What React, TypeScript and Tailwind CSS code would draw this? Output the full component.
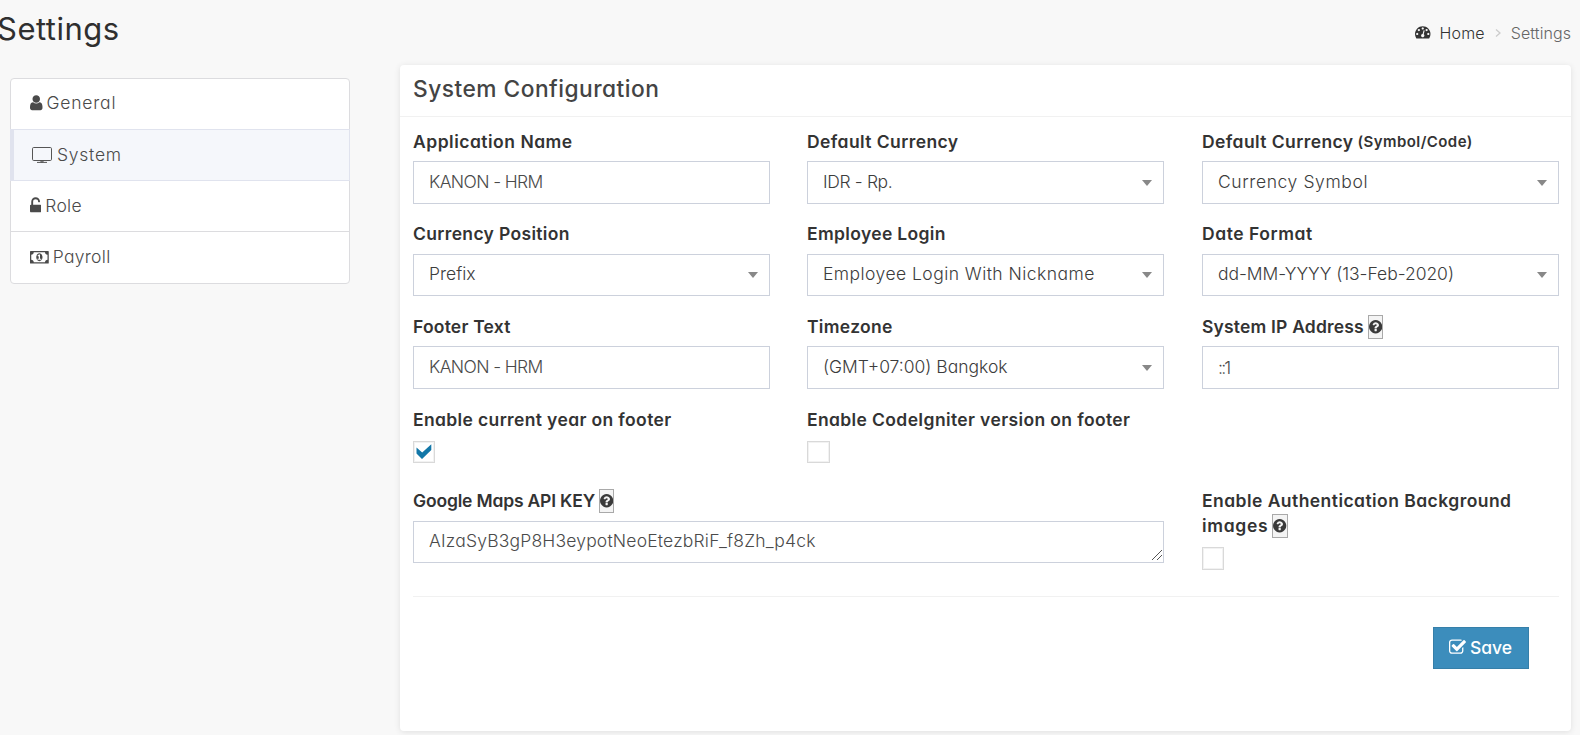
import type { ReactNode } from "react";

const ICONS = {
  user: {
    box: "256 0 1280 1792",
    d: "M1536 1399q0 109-62.5 187t-150.5 78h-854q-88 0-150.5-78t-62.5-187q0-85 8.5-160.5t31.5-152 58.5-131 94-89 134.5-34.5q131 128 313 128t313-128q76 0 134.5 34.5t94 89 58.5 131 31.5 152 8.5 160.5zm-256-887q0 159-112.5 271.5t-271.5 112.5-271.5-112.5-112.5-271.5 112.5-271.5 271.5-112.5 271.5 112.5 112.5 271.5z",
  },
  unlock: {
    box: "256 0 1152 1792",
    d: "M1312 896q40 0 68 28t28 68v576q0 40-28 68t-68 28h-960q-40 0-68-28t-28-68v-576q0-40 28-68t68-28h32v-320q0-185 131.5-316.5t316.5-131.5 316.5 131.5 131.5 316.5q0 26-19 45t-45 19h-64q-26 0-45-19t-19-45q0-106-75-181t-181-75-181 75-75 181v320h736z",
  },
  check: {
    box: "64 0 1664 1792",
    d: "M1472 930v318q0 119-84.5 203.5t-203.5 84.5h-832q-119 0-203.5-84.5t-84.5-203.5v-832q0-119 84.5-203.5t203.5-84.5h832q63 0 117 25 15 7 18 23 3 17-9 29l-49 49q-10 10-23 10-3 0-9-2-23-6-45-6h-832q-66 0-113 47t-47 113v832q0 66 47 113t113 47h832q66 0 113-47t47-113v-254q0-13 9-22l64-64q10-10 23-10 6 0 12 3 20 8 20 29zm231-489l-814 814q-24 24-57 24t-57-24l-430-430q-24-24-24-57t24-57l110-110q24-24 57-24t57 24l263 263 647-647q24-24 57-24t57 24l110 110q24 24 24 57t-24 57z",
  },
  help: {
    box: "128 0 1536 1792",
    d: "M1024 1376v-192q0-14-9-23t-23-9h-192q-14 0-23 9t-9 23v192q0 14 9 23t23 9h192q14 0 23-9t9-23zm256-672q0-88-55.5-163t-138.5-116-170-41q-243 0-371 213-15 24 8 42l132 100q7 6 19 6 16 0 25-12 53-68 86-92 34-24 86-24 48 0 85.5 26t37.5 59q0 38-20 61t-68 45q-63 28-115.5 86.5t-52.5 125.5v36q0 14 9 23t23 9h192q14 0 23-9t9-23q0-19 21.5-49.5t54.5-49.5q32-18 49-28.5t46-35 44.5-48 28-60.5 12.5-81zm384 192q0 209-103 385.5t-279.5 279.5-385.5 103-385.5-103-279.5-279.5-103-385.5 103-385.5 279.5-279.5 385.5-103 385.5 103 279.5 279.5 103 385.5z",
  },
  gauge: {
    box: "0 0 1792 1792",
    d: "M384 1152q0-53-37.5-90.5t-90.5-37.5-90.5 37.5-37.5 90.5 37.5 90.5 90.5 37.5 90.5-37.5 37.5-90.5zm192-448q0-53-37.5-90.5t-90.5-37.5-90.5 37.5-37.5 90.5 37.5 90.5 90.5 37.5 90.5-37.5 37.5-90.5zm428 481l101-382q6-26-7.5-48.5t-38.5-29.5-48 6.5-30 39.5l-101 382q-60 5-107 43.5t-63 98.5q-20 77 20 146t117 89 146-20 89-117q16-60-6-117t-72-91zm660-33q0-53-37.5-90.5t-90.5-37.5-90.5 37.5-37.5 90.5 37.5 90.5 90.5 37.5 90.5-37.5 37.5-90.5zm-640-640q0-53-37.5-90.5t-90.5-37.5-90.5 37.5-37.5 90.5 37.5 90.5 90.5 37.5 90.5-37.5 37.5-90.5zm448 192q0-53-37.5-90.5t-90.5-37.5-90.5 37.5-37.5 90.5 37.5 90.5 90.5 37.5 90.5-37.5 37.5-90.5zm320 448q0 261-141 483-19 29-54 29h-1402q-35 0-54-29-141-221-141-483 0-182 71-348t191-286 286-191 348-71 348 71 286 191 191 286 71 348z",
  },
};

function Icon({ name, className }: { name: keyof typeof ICONS; className: string }) {
  return (
    <svg viewBox={ICONS[name].box} className={`shrink-0 fill-current ${className}`}>
      <path d={ICONS[name].d} />
    </svg>
  );
}

function MonitorIcon() {
  return (
    <svg viewBox="0 0 20 16" className="h-4 w-5 shrink-0 fill-none stroke-[#555]">
      <rect x="0.5" y="0.5" width="19" height="13" rx="1.2" />
      <path d="M9 13.5v1.5h2v-1.5M5 15.4h10" />
    </svg>
  );
}

function MoneyIcon() {
  return (
    <svg viewBox="0 0 1920 1280" className="h-[12.5px] w-[18.75px] shrink-0 fill-current">
      <path
        fillRule="evenodd"
        d="M64 0h1792q64 0 64 64v1152q0 64-64 64h-1792q-64 0-64-64v-1152q0-64 64-64zM384 128q0 106-75 181t-181 75v512q106 0 181 75t75 181h1152q0-106 75-181t181-75v-512q-106 0-181-75t-75-181zM960 240c177 0 320 179 320 400s-143 400-320 400-320-179-320-400 143-400 320-400zM768 896h384v-96h-128v-448h-114l-148 137 77 80q42-37 55-57h2v288h-128z"
      />
    </svg>
  );
}

function HelpBadge() {
  return (
    <span className="ml-1 inline-flex h-6 w-[15.5px] items-center justify-center border border-[#a9a9a9] bg-[#f4f4f4] text-[#3a3a3a]">
      <Icon name="help" className="h-[15.5px] w-[13.3px]" />
    </span>
  );
}

function Label({ text, tracking, children }: { text: string; tracking: string; children?: ReactNode }) {
  return (
    <div className="flex h-[25px] items-center whitespace-nowrap text-[17.5px] font-semibold leading-[25px] text-[#333]">
      <span className={tracking}>{text}</span>
      {children}
    </div>
  );
}

function Control({
  text,
  className,
  select,
}: {
  text: string;
  className: string;
  select?: boolean;
}) {
  return (
    <div
      className={`flex w-[357px] items-center justify-between border border-[#ccd1dc] bg-white pl-[15px] pr-[11px] text-[17.5px] font-light ${className} ${select ? "text-[#3c3c3c]" : "text-[#4a4a4a]"}`}
    >
      <span className="whitespace-nowrap">{text}</span>
      {select && (
        <svg viewBox="0 0 10 6" className="h-1.5 w-2.5 fill-[#888]">
          <path d="M0 0h10L5 6z" />
        </svg>
      )}
    </div>
  );
}

function Checkbox({ checked, className }: { checked?: boolean; className: string }) {
  return (
    <div className={`flex items-center justify-center border border-[#d9d9d9] bg-white shadow-[inset_0_0_0_1px_#f2f2f2] ${className}`}>
      {checked && (
        <svg viewBox="0 0 16 15" className="mb-px h-[15px] w-4 fill-[#1277a8]">
          <path d="M0.5 3.5 6.2 8.6 15.3 0.3V6L6 15 0.5 9.5z" />
        </svg>
      )}
    </div>
  );
}

function NavItem({ icon, label, className }: { icon: ReactNode; label: string; className: string }) {
  return (
    <li className={`flex items-center ${className}`}>
      {icon}
      <span>{label}</span>
    </li>
  );
}

export default function App() {
  return (
    <div className="flex h-[735px] w-[1580px] flex-col overflow-hidden bg-[#f8f8f8] font-['Inter',sans-serif] text-[#444] [font-feature-settings:'cv11']">
      <header className="flex h-[65px] shrink-0 items-start justify-between pr-[9px]">
        <h1 className="-ml-[3px] pt-[9px] text-[31px] leading-[40px] tracking-[0.5px] text-[#2f2f2f]">Settings</h1>
        <nav className="flex h-[65px] items-center text-[16px] text-[#333]">
          <Icon name="gauge" className="mr-[9px] mb-px size-[15.5px]" />
          <span className="font-light tracking-[0.15px]">Home</span>
          <svg viewBox="0 0 6 8" className="mx-2.5 h-2 w-1.5 fill-none stroke-[#ccc]">
            <path d="M1 0.5 5 4 1 7.5" strokeWidth="1.3" />
          </svg>
          <span className="font-light tracking-[0.08px] text-[#666]">Settings</span>
        </nav>
      </header>
      <div className="flex items-start">
        <aside className="ml-2.5 mt-[13px] w-[340px] shrink-0">
          <ul className="rounded-[4px] border border-[#dcdcdf] bg-white text-[17.5px] font-light text-[#4a4a4a]">
            <NavItem
              className="h-[50px] pb-0.5 pl-[19px] tracking-[0.8px]"
              icon={<Icon name="user" className="mr-1 h-[17.5px] w-[12.5px]" />}
              label="General"
            />
            <NavItem
              className="-mx-px h-[52px] border border-l-4 border-[#e0e3ee] bg-[#f5f7fb] pl-[18px] pt-px tracking-[0.75px]"
              icon={<span className="mb-0.5 mr-[5px]"><MonitorIcon /></span>}
              label="System"
            />
            <NavItem
              className="h-[51px] border-b border-[#dcdcdf] pl-[19px] pt-px tracking-[0.3px]"
              icon={<Icon name="unlock" className="mb-1 mr-1 h-[17.5px] w-[11.25px]" />}
              label="Role"
            />
            <NavItem
              className="h-[51px] pl-[19px] tracking-[0.3px]"
              icon={<span className="mr-1"><MoneyIcon /></span>}
              label="Payroll"
            />
          </ul>
        </aside>
        <main className="ml-[50px] h-[666px] w-[1171px] rounded-[4px] bg-white shadow-[0_1px_6px_rgba(0,0,0,0.1)]">
          <h2 className="h-[52px] border-b border-[#f1f1f1] pl-[13px] text-[22.75px] font-medium leading-[48px] tracking-[0.48px] text-[#444]">
            System Configuration
          </h2>
          <form className="pl-[13px] pr-3 pt-3">
            <div className="grid grid-cols-[394px_395px_357px]">
              <div className="h-[92px]">
                <Label text="Application Name" tracking="tracking-[0.5px]" />
                <Control text="KANON - HRM" className="mt-[7px] h-[43px] tracking-[-0.62px]" />
              </div>
              <div className="h-[92px]">
                <Label text="Default Currency" tracking="tracking-[0.41px]" />
                <Control select text="IDR - Rp." className="mt-[7px] h-[43px] tracking-[-0.36px]" />
              </div>
              <div className="h-[92px]">
                <Label text="Default Currency" tracking="tracking-[0.41px]">
                  <small className="ml-1 text-[15px] tracking-[0.44px]">(Symbol/Code)</small>
                </Label>
                <Control select text="Currency Symbol" className="mt-[7px] h-[43px] tracking-[0.6px]" />
              </div>

              <div className="h-[93px]">
                <Label text="Currency Position" tracking="tracking-[0.34px]" />
                <Control select text="Prefix" className="mt-2 h-[42px] pb-px tracking-[0px]" />
              </div>
              <div className="h-[93px]">
                <Label text="Employee Login" tracking="tracking-[0.34px]" />
                <Control select text="Employee Login With Nickname" className="mt-2 h-[42px] pb-px tracking-[0.45px]" />
              </div>
              <div className="h-[93px]">
                <Label text="Date Format" tracking="tracking-[0.54px]" />
                <Control select text="dd-MM-YYYY (13-Feb-2020)" className="mt-2 h-[42px] pb-px tracking-[-0.04px]" />
              </div>

              <div className="h-[93px]">
                <Label text="Footer Text" tracking="tracking-[0.2px]" />
                <Control text="KANON - HRM" className="mt-[7px] h-[43px] tracking-[-0.62px]" />
              </div>
              <div className="h-[93px]">
                <Label text="Timezone" tracking="tracking-[0.32px]" />
                <Control select text="(GMT+07:00) Bangkok" className="mt-[7px] h-[43px] tracking-[0px]" />
              </div>
              <div className="h-[93px]">
                <Label text="System IP Address" tracking="tracking-[0.18px]">
                  <HelpBadge />
                </Label>
                <Control text="::1" className="mt-[7px] h-[43px] pt-0.5 tracking-[-1.8px]" />
              </div>

              <div className="h-[81px]">
                <Label text="Enable current year on footer" tracking="tracking-[0.36px]" />
                <Checkbox checked className="mt-[9px] size-[22px]" />
              </div>
              <div className="col-span-2 h-[81px]">
                <Label text="Enable CodeIgniter version on footer" tracking="tracking-[0.37px]" />
                <Checkbox className="mt-[9px] h-[22px] w-[23px]" />
              </div>

              <div className="col-span-2 h-[108px]">
                <Label text="Google Maps API KEY" tracking="tracking-[-0.18px]">
                  <HelpBadge />
                </Label>
                <div className="mt-2 flex h-[42px] w-[751px] items-end justify-between border border-[#ccd1dc] pl-[15px] pr-px text-[17.5px] font-light text-[#4a4a4a]">
                  <span className="self-center pb-px tracking-[0.19px]">AIzaSyB3gP8H3eypotNeoEtezbRiF_f8Zh_p4ck</span>
                  <svg viewBox="0 0 10 10" className="mb-0.5 size-2.5 stroke-[#555]">
                    <path d="M0 10 10 0M5 10l5-5" strokeWidth="1" />
                  </svg>
                </div>
              </div>
              <div className="h-[108px]">
                <Label text="Enable Authentication Background" tracking="tracking-[0.45px]" />
                <Label text="images" tracking="tracking-[0.7px]">
                  <HelpBadge />
                </Label>
                <Checkbox className="mt-[9px] h-[23px] w-[22px]" />
              </div>
            </div>
            <div className="flex justify-end border-t border-[#f1f1f1] pr-[30px] pt-[30px]">
              <button
                type="button"
                className="flex h-[42px] w-24 items-center border border-[#367fa9] bg-[#3c8dbc] pl-[15px] pt-px text-[17.5px] font-medium tracking-[0px] text-white"
              >
                <Icon name="check" className="mb-0.5 mr-1 h-[18.5px] w-[17px]" />
                Save
              </button>
            </div>
          </form>
        </main>
      </div>
    </div>
  );
}
